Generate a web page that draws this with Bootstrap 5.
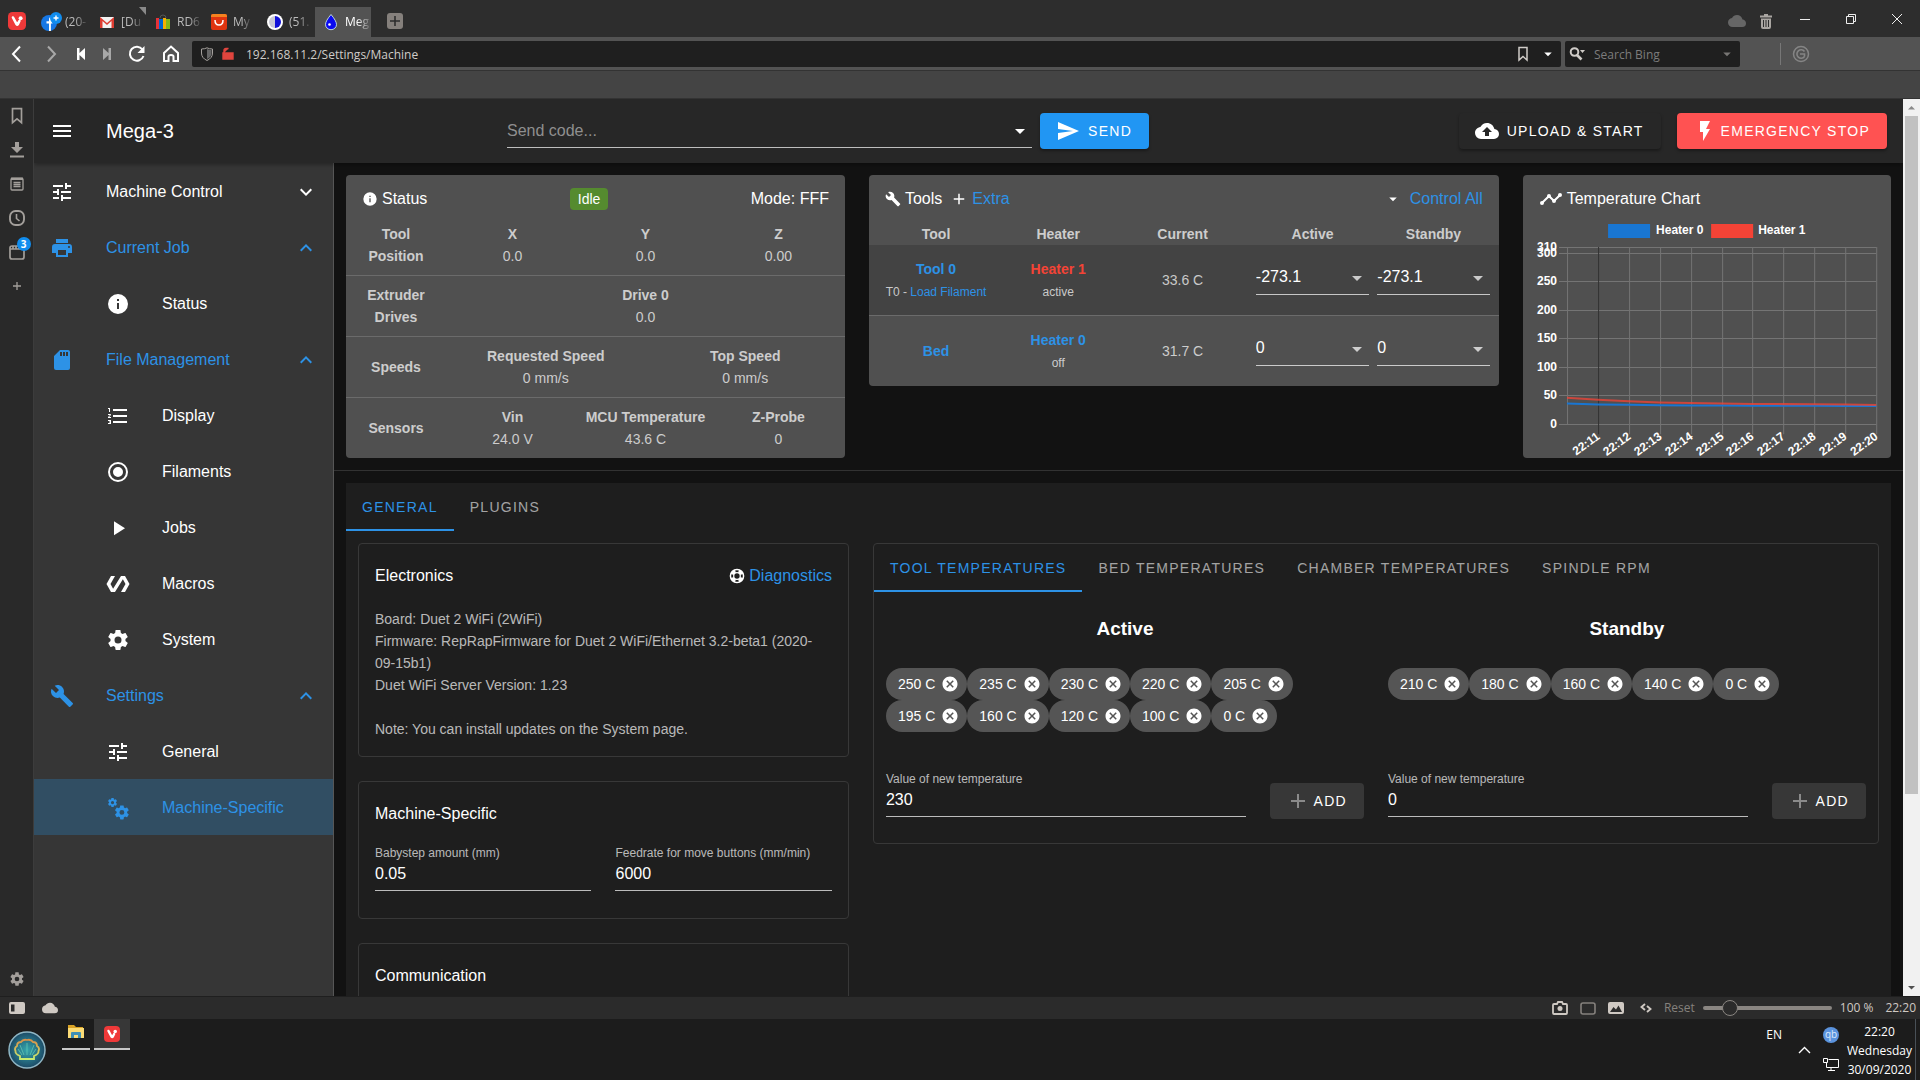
<!DOCTYPE html>
<html lang="en" data-bs-theme="dark">
<head>
<meta charset="utf-8">
<meta name="viewport" content="width=device-width, initial-scale=1">
<title>Mega-3</title>
<link href="https://cdn.jsdelivr.net/npm/bootstrap@5.3.0/dist/css/bootstrap.min.css" rel="stylesheet">
<style>
:root { --blue: #2196f3; --soft: rgba(255,255,255,.7); --rule: rgba(255,255,255,.7); }
body { font-family: "Liberation Sans", Arial, sans-serif; font-size: 14px; line-height: 22px; color: #fff; background: #1c1c1c; }
a { color: #2d92e6; text-decoration: none; }
svg { fill: currentColor; flex: none; display: block; }
button { color: inherit; }
.ico24 { width: 24px; height: 24px; }
.ico18 { width: 18px; height: 18px; }
.ico16 { width: 16px; height: 16px; }
.chrome-ui { font-family: "Open Sans", "Noto Sans", sans-serif; font-size: 12px; line-height: 16px; color: #d0ccc8; }
.plain { background: none; border: 0; padding: 0; }
.dim { color: #85817d; }

/* browser frame */
.tabstrip { background: #2d2d2d; height: 37px; padding-left: 8px; }
.viv-btn { width: 27px; }
.btab { width: 56px; height: 30px; padding: 0 0 0 8px; gap: 6px; color: #bbb; }
.btab svg { overflow: visible; }
.btab span { white-space: nowrap; -webkit-mask-image: linear-gradient(90deg,#000 50%,rgba(0,0,0,.2)); mask-image: linear-gradient(90deg,#000 50%,rgba(0,0,0,.2)); }
.btab.current { background: #535353; color: #fff; }
.wincol { width: 46px; }
.sync { color: #666; }
.toolbar { background: #535353; height: 34px; border-bottom: 1px solid #333; color: #fff; }
.navbtns { width: 192px; }
.urlbox, .findbox { background: #1f1f1f; height: 26px; border-radius: 2px; color: #d0ccc8; }
.urlbox input, .findbox input { background: none; border: 0; outline: 0; color: inherit; min-width: 0; flex: 1; padding: 2px 0 0; }
.findbox { width: 175px; }
.findbox input::placeholder { color: #7c7c7c; }
.toolend { width: 180px; color: #858585; padding-left: 40px; }
.toolend span { height: 22px; border-left: 1px solid #777; }
.bookbar { background: #444; height: 28px; border-bottom: 1px solid #333; }
.rail { width: 34px; background: #292929; border-right: 1px solid #3c3c3c; color: #a39f9b; }
.rail button { height: 34px; }
.rail-count { position: absolute; left: 9px; top: 2px; width: 14px; height: 14px; border-radius: 7px; background: #118dee; color: #fff; font-size: 10px; line-height: 14px; text-align: center; font-weight: 700; }
.scroller { width: 17px; background: #f1f1f1; color: #8a8a8a; }
.scroller .thumb { height: 678px; background: #c1c1c1; width: 13px; }
.statusbar { background: #2b2b2b; height: 23px; border-top: 1px solid #1f1f1f; color: #cfc9c3; }
.zoomer { appearance: none; width: 129px; height: 16px; background: none; margin: 0; }
.zoomer::-webkit-slider-runnable-track { height: 4px; background: #8a8682; border-radius: 2px; }
.zoomer::-webkit-slider-thumb { appearance: none; width: 16px; height: 16px; margin-top: -6px; border-radius: 50%; background: #2b2b2b; border: 1px solid #8a8682; }
.taskbar { background: #1c1c1c; height: 61px; color: #fff; }
.taskitem { width: 28px; height: 31px; border-bottom: 2px solid #c8c8c8; }
.taskitem.current { width: 36px; background: #373737; }
.clock { line-height: 19px; width: 72px; padding-top: 3px; }

/* application */
.appbar { background: #272727; height: 64px; box-shadow: 0 2px 4px rgba(0,0,0,.3); z-index: 2; padding-right: 16px; }
.appname { width: 473px; font-size: 20px; padding-left: 16px; gap: 32px; }
.codebox { max-width: 642px; }
.sidenav { width: 300px; background: #363636; border-right: 1px solid #565656; font-size: 16px; }
.sidenav a { height: 56px; padding: 1px 15px 0 16px; gap: 32px; color: #fff; }
.sidenav a.open, .sidenav a.picked { color: #2d92e6; }
.sidenav a.sub { padding-left: 72px; }
.sidenav a.picked { background: #314e63; }
.stage { background: #121212; }
.mbtn { height: 36px; border: 0; border-radius: 4px; padding: 0 17px 0 16px; font-size: 14px; letter-spacing: .09em; white-space: nowrap; color: #fff; box-shadow: 0 2px 3px rgba(0,0,0,.35); }
.mbtn.send { background: var(--blue); }
.mbtn.upload { background: #272727; }
.mbtn.stop { background: #ff5252; }
.mbtn.adder { background: #373737; box-shadow: none; margin-top: 14px; }
.mbtn.adder svg { color: #8a8a8a; }
.uline { background: none; border: 0; border-bottom: 1px solid var(--rule); border-radius: 0; color: #fff; font-size: 16px; line-height: 24px; height: 30px; padding: 0 0 4px; outline: 0; width: 100%; appearance: none; }
.codebox .uline { height: 34px; padding: 4px 0; }
.uline::placeholder { color: #8f8f8f; }
.pick { position: relative; }
.pick svg { position: absolute; right: 0; top: 1px; pointer-events: none; }
.codebox .pick svg { top: 5px; }
.panel { background: #505050; border-radius: 4px; color: rgba(255,255,255,.72); overflow: hidden; }
.panel-head { height: 48px; padding: 0 16px; font-size: 16px; color: #fff; }
.state { background: #558b2f; color: #fff; border-radius: 4px; padding: 0 8px; height: 22px; font-size: 14px; line-height: 22px; }
.srow { padding: 8px 0; }
.srow + .srow { border-top: 1px solid #6b6b6b; }
.slabel { width: 100px; padding: 0 16px; }
.heat { table-layout: fixed; width: 100%; text-align: center; }
.heat th { padding: 0; font-weight: 700; text-align: center; height: 22px; }
.heat td { height: 71px; padding: 1px 0 0; vertical-align: middle; }
.heat td.cell-in { padding: 0 4px; }
.heat .lit td { background: #434343; border-bottom: 1px solid #6b6b6b; height: 70px; }
.tiny { font-size: 12px; }
.heat a.hot { color: #f44336; }
.split { border-top: 1px solid #323232; margin: 12px 0; }
.sheet { background: #1e1e1e; margin: 0 12px; }
.mtabs { height: 48px; }
.mtabs button { padding-top: 2px; letter-spacing: .09em; font-size: 14px; color: rgba(255,255,255,.6); border-bottom: 2px solid transparent; }
.mtabs button.on { color: #2d92e6; border-bottom-color: #2d92e6; }
.box { border: 1px solid #383838; border-radius: 4px; color: var(--soft); }
.box-title { font-size: 16px; line-height: 32px; color: #fff; padding: 16px 16px 0; }
.box-fields { padding: 15px 16px 27px; }
.fieldlabel { font-size: 12px; line-height: 16px; color: var(--soft); display: block; }
.presets { height: 93px; align-content: flex-start; }
.chip { height: 32px; border-radius: 16px; background: #555; color: #fff; padding: 0 8px 0 12px; gap: 6px; }
.group-title { font-size: 19px; line-height: 28px; font-weight: 700; color: #fff; text-align: center; margin: 23px 0 25px; }
.chart text { font-size: 12px; font-weight: 700; fill: #fff; }
</style>
</head>
<body class="vh-100 d-flex flex-column overflow-hidden">

<svg width="0" height="0" class="position-absolute" aria-hidden="true">
<symbol id="menu" viewBox="0 0 24 24"><path d="M3,6H21V8H3V6M3,11H21V13H3V11M3,16H21V18H3V16Z"/></symbol>
<symbol id="tune" viewBox="0 0 24 24"><path d="M3,17V19H9V17H3M3,5V7H13V5H3M13,21V19H21V17H13V15H11V21H13M7,9V11H3V13H7V15H9V9H7M21,13V11H11V13H21M15,9H17V7H21V5H17V3H15V9Z"/></symbol>
<symbol id="printer" viewBox="0 0 24 24"><path d="M18,3H6V7H18M19,12A1,1 0 0,1 18,11A1,1 0 0,1 19,10A1,1 0 0,1 20,11A1,1 0 0,1 19,12M16,19H8V14H16M19,8H5A3,3 0 0,0 2,11V17H6V21H18V17H22V11A3,3 0 0,0 19,8Z"/></symbol>
<symbol id="info" viewBox="0 0 24 24"><path d="M13,9H11V7H13M13,17H11V11H13M12,2A10,10 0 0,0 2,12A10,10 0 0,0 12,22A10,10 0 0,0 22,12A10,10 0 0,0 12,2Z"/></symbol>
<symbol id="sd" viewBox="0 0 24 24"><path d="M18,8H16V4H18M15,8H13V4H15M12,8H10V4H12M18,2H10L4,8V20A2,2 0 0,0 6,22H18A2,2 0 0,0 20,20V4A2,2 0 0,0 18,2Z"/></symbol>
<symbol id="list" viewBox="0 0 24 24"><path d="M7,13V11H21V13H7M7,19V17H21V19H7M7,7V5H21V7H7M3,8V5H2V4H4V8H3M2,17V16H5V20H2V19H4V18.5H3V17.5H4V17H2M4.25,10A0.75,0.75 0 0,1 5,10.75C5,10.95 4.92,11.14 4.79,11.27L3.12,13H5V14H2V13.08L4,11H2V10H4.25Z"/></symbol>
<symbol id="radio" viewBox="0 0 24 24"><path d="M12,20A8,8 0 0,1 4,12A8,8 0 0,1 12,4A8,8 0 0,1 20,12A8,8 0 0,1 12,20M12,2A10,10 0 0,0 2,12A10,10 0 0,0 12,22A10,10 0 0,0 22,12A10,10 0 0,0 12,2M12,7A5,5 0 0,0 7,12A5,5 0 0,0 12,17A5,5 0 0,0 17,12A5,5 0 0,0 12,7Z"/></symbol>
<symbol id="play" viewBox="0 0 24 24"><path d="M8,5.14V19.14L19,12.14L8,5.14Z"/></symbol>
<symbol id="polymer" viewBox="0 0 24 24"><path d="M19,4H15L7.1,16.63L4.5,12L9,4H5L0.5,12L5,20H9L16.89,7.37L19.5,12L15,20H19L23.5,12L19,4Z"/></symbol>
<symbol id="cog" viewBox="0 0 24 24"><path id="cogshape" d="M12,15.5A3.5,3.5 0 0,1 8.5,12A3.5,3.5 0 0,1 12,8.5A3.5,3.5 0 0,1 15.5,12A3.5,3.5 0 0,1 12,15.5M19.43,12.97C19.47,12.65 19.5,12.33 19.5,12C19.5,11.67 19.47,11.34 19.43,11L21.54,9.37C21.73,9.22 21.78,8.95 21.66,8.73L19.66,5.27C19.54,5.05 19.27,4.96 19.05,5.05L16.56,6.05C16.04,5.66 15.5,5.32 14.87,5.07L14.5,2.42C14.46,2.18 14.25,2 14,2H10C9.75,2 9.54,2.18 9.5,2.42L9.13,5.07C8.5,5.32 7.96,5.66 7.44,6.05L4.95,5.05C4.73,4.96 4.46,5.05 4.34,5.27L2.34,8.73C2.21,8.95 2.27,9.22 2.46,9.37L4.57,11C4.53,11.34 4.5,11.67 4.5,12C4.5,12.33 4.53,12.65 4.57,12.97L2.46,14.63C2.27,14.78 2.21,15.05 2.34,15.27L4.34,18.73C4.46,18.95 4.73,19.03 4.95,18.95L7.44,17.94C7.96,18.34 8.5,18.68 9.13,18.93L9.5,21.58C9.54,21.82 9.75,22 10,22H14C14.25,22 14.46,21.82 14.5,21.58L14.87,18.93C15.5,18.67 16.04,18.34 16.56,17.94L19.05,18.95C19.27,19.03 19.54,18.95 19.66,18.73L21.66,15.27C21.78,15.05 21.73,14.78 21.54,14.63L19.43,12.97Z"/></symbol>
<symbol id="cogs" viewBox="0 0 24 24"><use href="#cogshape" transform="translate(1 1) scale(.46)"/><use href="#cogshape" transform="translate(7.5 8) scale(.7)"/></symbol>
<symbol id="wrench" viewBox="0 0 24 24"><path d="M22.7,19L13.6,9.9C14.5,7.6 14,4.9 12.1,3C10.1,1 7.1,0.6 4.7,1.7L9,6L6,9L1.6,4.7C0.4,7.1 0.9,10.1 2.9,12.1C4.8,14 7.5,14.5 9.8,13.6L18.9,22.7C19.3,23.1 19.9,23.1 20.3,22.7L22.6,20.4C23.1,20 23.1,19.3 22.7,19Z"/></symbol>
<symbol id="down" viewBox="0 0 24 24"><path d="M7.41,8.58L12,13.17L16.59,8.58L18,10L12,16L6,10L7.41,8.58Z"/></symbol>
<symbol id="up" viewBox="0 0 24 24"><path d="M7.41,15.41L12,10.83L16.59,15.41L18,14L12,8L6,14L7.41,15.41Z"/></symbol>
<symbol id="drop" viewBox="0 0 24 24"><path d="M7,10L12,15L17,10H7Z"/></symbol>
<symbol id="send" viewBox="0 0 24 24"><path d="M2,21L23,12L2,3V10L17,12L2,14V21Z"/></symbol>
<symbol id="cloudup" viewBox="0 0 24 24"><path d="M14,13V17H10V13H7L12,8L17,13M19.35,10.03C18.67,6.59 15.64,4 12,4C9.11,4 6.6,5.64 5.35,8.03C2.34,8.36 0,10.9 0,14A6,6 0 0,0 6,20H19A5,5 0 0,0 24,15C24,12.36 21.95,10.22 19.35,10.03Z"/></symbol>
<symbol id="cloud" viewBox="0 0 24 24"><path d="M19.35,10.03C18.67,6.59 15.64,4 12,4C9.11,4 6.6,5.64 5.35,8.03C2.34,8.36 0,10.9 0,14A6,6 0 0,0 6,20H19A5,5 0 0,0 24,15C24,12.36 21.95,10.22 19.35,10.03Z"/></symbol>
<symbol id="flash" viewBox="0 0 24 24"><path d="M7,2V13H10V22L17,10H13L17,2H7Z"/></symbol>
<symbol id="plus" viewBox="0 0 24 24"><path d="M19,13H13V19H11V13H5V11H11V5H13V11H19V13Z"/></symbol>
<symbol id="buoy" viewBox="0 0 24 24"><path fill-rule="evenodd" d="M12,1A11,11 0 1,0 12,23A11,11 0 1,0 12,1M12,8A4,4 0 1,1 12,16A4,4 0 1,1 12,8M9.2,3.7Q12,2.8 14.8,3.7L13.8,6.4Q12,5.800 10.2,6.4ZM9.2,20.3Q12,21.2 14.8,20.3L13.8,17.6Q12,18.2 10.2,17.6ZM3.7,9.2Q2.8,12 3.7,14.8L6.4,13.8Q5.8,12 6.4,10.2ZM20.3,9.2Q21.2,12 20.3,14.8L17.6,13.8Q18.2,12 17.6,10.2Z"/></symbol>
<symbol id="xcirc" viewBox="0 0 24 24"><path d="M12,2C17.53,2 22,6.47 22,12C22,17.53 17.53,22 12,22C6.47,22 2,17.53 2,12C2,6.47 6.47,2 12,2M15.59,7L12,10.59L8.41,7L7,8.41L10.59,12L7,15.59L8.41,17L12,13.41L15.59,17L17,15.59L13.41,12L17,8.41L15.59,7Z"/></symbol>
<symbol id="trend" viewBox="0 0 24 24"><path d="M23,8A2,2 0 0,1 21,10C20.82,10 20.65,9.97 20.5,9.93L16.93,13.5C16.97,13.65 17,13.82 17,14A2,2 0 0,1 15,16A2,2 0 0,1 13,14C13,13.82 13.03,13.65 13.07,13.5L10.5,10.93C10.35,10.97 10.18,11 10,11C9.82,11 9.65,10.97 9.5,10.93L4.93,15.5C4.97,15.65 5,15.82 5,16A2,2 0 0,1 3,18A2,2 0 0,1 1,16A2,2 0 0,1 3,14C3.18,14 3.35,14.03 3.5,14.07L8.07,9.5C8.03,9.35 8,9.18 8,9A2,2 0 0,1 10,7A2,2 0 0,1 12,9C12,9.18 11.97,9.35 11.93,9.5L14.5,12.07C14.65,12.03 14.82,12 15,12C15.18,12 15.35,12.03 15.5,12.07L19.07,8.5C19.03,8.35 19,8.18 19,8A2,2 0 0,1 21,6A2,2 0 0,1 23,8Z"/></symbol>
<symbol id="viv" viewBox="0 0 18 18"><rect width="18" height="18" rx="4.5" fill="#ef3939"/><path d="M5,5.5L8.6,12.2Q9.2,13 9.8,12.2L11.4,9" fill="none" stroke="#fff" stroke-width="2.6" stroke-linecap="round"/><circle cx="12.6" cy="6.2" r="2" fill="#fff"/></symbol>
<symbol id="mark" viewBox="0 0 16 16"><path d="M4,1.5H12V14L8,10.5L4,14Z" fill="none" stroke="currentColor" stroke-width="1.5"/></symbol>
</svg>

<!-- browser tabs -->
<div class="tabstrip chrome-ui d-flex align-items-end flex-shrink-0">
  <button class="plain viv-btn align-self-center pt-1" aria-label="Vivaldi menu"><svg width="18" height="18"><use href="#viv"/></svg></button>
  <button class="plain btab d-flex align-items-center"><svg class="ico16" viewBox="0 0 16 16"><circle cx="6" cy="9" r="8" fill="#1677e5"/><path d="M6 17V9.500H3.500V7.300H6V5.500Q6 3 9 3.100V5.100Q7.900 5 7.900 6V7.300H9.500V9.500H7.900V17Z" fill="#fff"/><circle cx="13" cy="4" r="6" fill="#118dee"/><path d="M13 1.500V6.500M10.500 4H15.500" stroke="#fff" stroke-width="1.400"/></svg><span>(20-</span></button>
  <button class="plain btab d-flex align-items-center"><svg class="ico16" viewBox="0 0 16 16"><path d="M1 3H15V14H1Z" fill="#f2f2f2"/><path d="M1 14V3L8 9L15 3V14H12.500V7L8 11L3.500 7V14Z" fill="#dd3c31"/><path d="M40 -7H47V1Z" fill="#8a8a8a"/></svg><span>[Du</span></button>
  <button class="plain btab d-flex align-items-center"><svg class="ico16" viewBox="0 0 16 16"><path d="M1 4H4V15H1Z" fill="#e53238"/><path d="M4 5H8V15H4Z" fill="#0064d2"/><path d="M8 4H11V15H8Z" fill="#f5af02"/><path d="M11 5H15V15H11Z" fill="#86b817"/><path d="M5 4Q5 1 8 1Q11 1 11 4" fill="none" stroke="#555"/></svg><span>RD6</span></button>
  <button class="plain btab d-flex align-items-center"><svg class="ico16" viewBox="0 0 16 16"><rect width="16" height="16" rx="2" fill="#e0340f"/><path d="M0 3V2Q0 0 2 0H14Q16 0 16 2V3Z" fill="#f5821f"/><path d="M4 6Q4 11 8 11Q12 11 12 6" fill="none" stroke="#fff" stroke-width="1.500"/></svg><span>My</span></button>
  <button class="plain btab d-flex align-items-center"><svg class="ico16" viewBox="0 0 16 16"><circle cx="8" cy="8" r="8" fill="#fff"/><path d="M8 2A6 6 0 0 1 8 14Z" fill="#1010d8"/><path d="M8 2A6 6 0 0 0 8 14Z" fill="#c9c9d6"/></svg><span>(51.</span></button>
  <button class="plain btab current d-flex align-items-center"><svg class="ico16" viewBox="0 0 16 16"><path d="M8 0.500Q13.500 7 13.500 10.500A5.500 5.200 0 0 1 2.500 10.500Q2.500 7 8 0.500Z" fill="#0a0af0" stroke="#dfe" stroke-width=".8"/><circle cx="6.500" cy="10.500" r="1.300" fill="#fff"/></svg><span>Meg</span></button>
  <button class="plain ms-3 mb-2" aria-label="New tab"><svg class="ico16" viewBox="0 0 16 16"><rect width="16" height="16" rx="3" fill="#85807c"/><path d="M8 3V13M3 8H13" stroke="#2d2d2d" stroke-width="1.600"/></svg></button>
  <div class="ms-auto d-flex align-items-center align-self-stretch">
    <button class="plain sync me-2 pt-1" aria-label="Sync"><svg class="ico18"><use href="#cloud"/></svg></button>
    <button class="plain me-2 ms-1 pt-1" aria-label="Closed tabs"><svg class="ico16" viewBox="0 0 16 16"><path d="M2 2.500H6V1H10V2.500H14V4.500H2ZM3 5.500H13V14Q13 16 11 16H5Q3 16 3 14ZM5 7V14H6V7ZM7.500 7V14H8.500V7ZM10 7V14H11V7Z" fill="#aaa6a2" fill-rule="evenodd"/></svg></button>
    <button class="plain wincol" aria-label="Minimise"><svg class="mx-auto" width="10" height="10"><path d="M0 5.500H10" stroke="#eee"/></svg></button>
    <button class="plain wincol" aria-label="Restore"><svg class="mx-auto" width="10" height="10"><path d="M.5 2.500H7.500V9.500H.5ZM2.500 2.500V.5H9.500V7.500H7.500" fill="none" stroke="#eee"/></svg></button>
    <button class="plain wincol" aria-label="Close"><svg class="mx-auto" width="10" height="10"><path d="M0 0L10 10M10 0L0 10" stroke="#eee"/></svg></button>
  </div>
</div>

<!-- address bar -->
<div class="toolbar chrome-ui d-flex align-items-center flex-shrink-0">
  <div class="navbtns d-flex align-items-center gap-3 ps-2">
    <button class="plain" aria-label="Back"><svg class="ico18" viewBox="0 0 18 18"><path d="M12 1.500L5 9L12 16.500" fill="none" stroke="#fff" stroke-width="2"/></svg></button>
    <button class="plain" aria-label="Forward"><svg class="ico18" viewBox="0 0 18 18"><path d="M6 1.500L13 9L6 16.500" fill="none" stroke="#a8a8a8" stroke-width="2"/></svg></button>
    <button class="plain" aria-label="Rewind"><svg width="10" height="12"><path d="M1 0H3.500V5L9 0V12L3.500 7V12H1Z" fill="#fff"/></svg></button>
    <button class="plain" aria-label="Fast forward"><svg width="10" height="12"><path d="M9 0H6.500V5L1 0V12L6.500 7V12H9Z" fill="#a8a8a8"/></svg></button>
    <button class="plain" aria-label="Reload"><svg class="ico18" viewBox="0 0 18 18"><path d="M14.500 4.500A7 7 0 1 0 15.500 11" fill="none" stroke="#fff" stroke-width="2"/><path d="M16.500 1V8H9.500Z" fill="#fff"/></svg></button>
    <button class="plain" aria-label="Home"><svg class="ico18" viewBox="0 0 18 18"><path d="M2 8L9 1.500L16 8V16H11.500V11.500Q11.500 10 9 10Q6.500 10 6.500 11.500V16H2Z" fill="none" stroke="#fff" stroke-width="2"/></svg></button>
  </div>
  <div class="urlbox d-flex align-items-center flex-grow-1 ps-1">
    <svg class="ms-1 me-2" width="14" height="14"><path d="M1.500 2Q5 2 7 .8Q9 2 12.500 2V6Q12.500 11 7 13.500Q1.500 11 1.500 6Z" fill="none" stroke="#a5a19d"/><path d="M7 2V12Q11.500 10 11.500 6V3Q9 3 7 2Z" fill="#666"/></svg>
    <svg class="me-2" width="12" height="13"><path d="M1 6H11V12H1ZM2 6V3.500Q2 1.500 4 1.500H6.500" fill="#e0453e" stroke="#e0453e" stroke-width="1.400"/></svg>
    <input class="ms-1" aria-label="Address" value="192.168.11.2/Settings/Machine">
    <svg class="ico16 me-2"><use href="#mark"/></svg>
    <svg class="ico18 me-1 text-white"><use href="#drop"/></svg>
  </div>
  <div class="findbox d-flex align-items-center ms-1 px-1">
    <svg class="me-2" width="17" height="14"><circle cx="5.500" cy="5" r="3.800" fill="none" stroke="#d0ccc8" stroke-width="2"/><path d="M8 8L12.500 12.500" stroke="#d0ccc8" stroke-width="2.600"/><path d="M11 3H16L13.500 6Z"/></svg>
    <input aria-label="Search" placeholder="Search Bing">
    <svg class="ico18 opacity-50"><use href="#drop"/></svg>
  </div>
  <div class="toolend d-flex align-items-center">
    <span></span>
    <svg class="ms-2 ico24" viewBox="-3 -3 24 24"><circle cx="9" cy="9" r="7.500" fill="none" stroke="currentColor" stroke-width="1.500"/><path d="M12.500 6.500A4.200 4.200 0 1 0 12.500 11.500M8 9H12.500V11.500" fill="none" stroke="currentColor" stroke-width="1.600"/></svg>
  </div>
</div>
<div class="bookbar flex-shrink-0"></div>

<div class="d-flex flex-grow-1 overflow-hidden">
  <!-- panel rail -->
  <div class="rail chrome-ui d-flex flex-column align-items-center flex-shrink-0">
    <button class="plain" aria-label="Bookmarks"><svg class="ico18"><use href="#mark"/></svg></button>
    <button class="plain" aria-label="Downloads"><svg class="ico18" viewBox="0 0 18 18"><path d="M7 1H11V6H15L9 12L3 6H7ZM2 14.500H16V16.500H2Z"/></svg></button>
    <button class="plain" aria-label="Notes"><svg class="ico16" viewBox="0 0 16 16"><path d="M3 2.500H13Q14 2.500 14 3.500V13Q14 14 13 14H3Q2 14 2 13V3.500Q2 2.500 3 2.500ZM4.500 6.500H11.500M4.500 8.500H11.500M4.500 10.500H11.500" fill="none" stroke="currentColor" stroke-width="1.300"/><path d="M2 1.500H14V4H2Z"/></svg></button>
    <button class="plain" aria-label="History"><svg class="ico18" viewBox="0 0 18 18"><rect x="2" y="2" width="14" height="14" rx="5.500" fill="none" stroke="currentColor" stroke-width="1.900"/><path d="M8.500 5V9.500L11.500 12" fill="none" stroke="currentColor" stroke-width="1.600"/></svg></button>
    <button class="plain position-relative" aria-label="Windows"><svg class="ico18" viewBox="0 0 18 18"><path d="M2 5Q2 3 4 3H14Q16 3 16 5V14Q16 16 14 16H4Q2 16 2 14ZM2 6H16M5 3V6M8 3V6M11 3V6" fill="none" stroke="currentColor" stroke-width="1.700"/></svg><span class="rail-count">3</span></button>
    <button class="plain" aria-label="Add panel"><svg class="ico16" viewBox="0 0 16 16"><path d="M8 4V12M4 8H12" stroke="currentColor" stroke-width="1.300"/></svg></button>
    <button class="plain mt-auto" aria-label="Settings"><svg class="ico16"><use href="#cog"/></svg></button>
  </div>

  <div class="d-flex flex-column flex-grow-1 overflow-hidden">
    <header class="appbar d-flex align-items-center flex-shrink-0">
      <div class="appname d-flex align-items-center flex-shrink-0"><button class="plain" aria-label="Toggle menu"><svg class="ico24"><use href="#menu"/></svg></button><span>Mega-3</span></div>
      <form class="codebox d-flex align-items-center flex-grow-1 gap-2">
        <div class="pick flex-grow-1"><input class="uline" aria-label="Send code" placeholder="Send code..."><svg class="ico24"><use href="#drop"/></svg></div>
        <button type="button" class="mbtn send d-flex align-items-center gap-2"><svg class="ico24"><use href="#send"/></svg>SEND</button>
      </form>
      <div class="d-flex ms-auto gap-3">
        <button class="mbtn upload d-flex align-items-center gap-2"><svg class="ico24"><use href="#cloudup"/></svg>UPLOAD &amp; START</button>
        <button class="mbtn stop d-flex align-items-center gap-1"><svg class="ico24"><use href="#flash"/></svg>EMERGENCY STOP</button>
      </div>
    </header>

    <div class="d-flex flex-grow-1 overflow-hidden">
      <nav class="sidenav flex-shrink-0 overflow-hidden">
        <a href="#" class="d-flex align-items-center"><svg class="ico24"><use href="#tune"/></svg>Machine Control<svg class="ico24 ms-auto"><use href="#down"/></svg></a>
        <a href="#" class="d-flex align-items-center open"><svg class="ico24"><use href="#printer"/></svg>Current Job<svg class="ico24 ms-auto"><use href="#up"/></svg></a>
        <a href="#" class="d-flex align-items-center sub"><svg class="ico24"><use href="#info"/></svg>Status</a>
        <a href="#" class="d-flex align-items-center open"><svg class="ico24"><use href="#sd"/></svg>File Management<svg class="ico24 ms-auto"><use href="#up"/></svg></a>
        <a href="#" class="d-flex align-items-center sub"><svg class="ico24"><use href="#list"/></svg>Display</a>
        <a href="#" class="d-flex align-items-center sub"><svg class="ico24"><use href="#radio"/></svg>Filaments</a>
        <a href="#" class="d-flex align-items-center sub"><svg class="ico24"><use href="#play"/></svg>Jobs</a>
        <a href="#" class="d-flex align-items-center sub"><svg class="ico24"><use href="#polymer"/></svg>Macros</a>
        <a href="#" class="d-flex align-items-center sub"><svg class="ico24"><use href="#cog"/></svg>System</a>
        <a href="#" class="d-flex align-items-center open"><svg class="ico24"><use href="#wrench"/></svg>Settings<svg class="ico24 ms-auto"><use href="#up"/></svg></a>
        <a href="#" class="d-flex align-items-center sub"><svg class="ico24"><use href="#tune"/></svg>General</a>
        <a href="#" class="d-flex align-items-center sub picked"><svg class="ico24"><use href="#cogs"/></svg>Machine-Specific</a>
      </nav>

      <main class="stage flex-grow-1 overflow-hidden">
        <div class="row mx-0 pt-2 mt-1">
          <div class="col-4">
            <section class="panel">
              <div class="panel-head d-flex align-items-center justify-content-between"><span class="d-flex align-items-center gap-1"><svg class="ico16"><use href="#info"/></svg>Status</span><span class="state">Idle</span><span>Mode: FFF</span></div>
              <div>
                <div class="srow d-flex align-items-center text-center pt-0"><strong class="slabel">Tool Position</strong><div class="row g-0 flex-grow-1"><div class="col"><strong>X</strong><br>0.0</div><div class="col"><strong>Y</strong><br>0.0</div><div class="col"><strong>Z</strong><br>0.00</div></div></div>
                <div class="srow d-flex align-items-center text-center"><strong class="slabel">Extruder Drives</strong><div class="row g-0 flex-grow-1"><div class="col"><strong>Drive 0</strong><br>0.0</div></div></div>
                <div class="srow d-flex align-items-center text-center"><strong class="slabel">Speeds</strong><div class="row g-0 flex-grow-1"><div class="col"><strong>Requested Speed</strong><br>0 mm/s</div><div class="col"><strong>Top Speed</strong><br>0 mm/s</div></div></div>
                <div class="srow d-flex align-items-center text-center"><strong class="slabel">Sensors</strong><div class="row g-0 flex-grow-1"><div class="col"><strong>Vin</strong><br>24.0 V</div><div class="col"><strong>MCU Temperature</strong><br>43.6 C</div><div class="col"><strong>Z-Probe</strong><br>0</div></div></div>
              </div>
            </section>
          </div>
          <div class="col-5">
            <section class="panel">
              <div class="panel-head d-flex align-items-center"><svg class="ico16 me-1"><use href="#wrench"/></svg>Tools<svg class="ico18 ms-2 me-1"><use href="#plus"/></svg><a href="#">Extra</a><svg class="ico18 ms-auto me-2"><use href="#drop"/></svg><a href="#">Control All</a></div>
              <table class="heat">
                <colgroup><col style="width:21.3%"><col style="width:17.5%"><col style="width:22%"><col style="width:19.3%"><col style="width:19.1%"><col style="width:0.8%"></colgroup>
                <thead><tr><th>Tool</th><th>Heater</th><th>Current</th><th>Active</th><th>Standby</th><th></th></tr></thead>
                <tbody>
                  <tr class="lit"><td><a href="#" class="fw-bold">Tool 0</a><br><span class="tiny">T0 - <a href="#">Load Filament</a></span></td><td><a href="#" class="fw-bold hot">Heater 1</a><br><span class="tiny">active</span></td><td>33.6 C</td>
                    <td class="cell-in"><div class="pick"><select class="uline" aria-label="Tool 0 active"><option>-273.1</option></select><svg class="ico24"><use href="#drop"/></svg></div></td>
                    <td class="cell-in"><div class="pick"><select class="uline" aria-label="Tool 0 standby"><option>-273.1</option></select><svg class="ico24"><use href="#drop"/></svg></div></td><td></td></tr>
                  <tr><td><a href="#" class="fw-bold">Bed</a></td><td><a href="#" class="fw-bold">Heater 0</a><br><span class="tiny">off</span></td><td>31.7 C</td>
                    <td class="cell-in"><div class="pick"><select class="uline" aria-label="Bed active"><option>0</option></select><svg class="ico24"><use href="#drop"/></svg></div></td>
                    <td class="cell-in"><div class="pick"><select class="uline" aria-label="Bed standby"><option>0</option></select><svg class="ico24"><use href="#drop"/></svg></div></td><td></td></tr>
                </tbody>
              </table>
            </section>
          </div>
          <div class="col-3">
            <section class="panel">
              <div class="panel-head d-flex align-items-center gap-1"><svg class="ico24"><use href="#trend"/></svg>Temperature Chart</div>
              <svg class="chart w-100" viewBox="0 0 368 235" id="tempChart">
                <rect x="85" y="1" width="42" height="14" fill="#1976d2"/><text x="133" y="11">Heater 0</text>
                <rect x="188" y="1" width="42" height="14" fill="#f44336"/><text x="235" y="11">Heater 1</text>
              </svg>
            </section>
          </div>
        </div>

        <div class="split"></div>

        <div class="sheet">
          <div class="mtabs d-flex"><button class="plain px-3 on">GENERAL</button><button class="plain px-3">PLUGINS</button></div>
          <div class="row mx-0 pt-2 mt-1">
            <div class="col-4">
              <section class="box mb-4">
                <div class="box-title d-flex justify-content-between"><span>Electronics</span><a href="#" class="d-flex align-items-center gap-1"><svg class="ico16 text-white"><use href="#buoy"/></svg>Diagnostics</a></div>
                <div class="p-3">Board: Duet 2 WiFi (2WiFi)<br>Firmware: RepRapFirmware for Duet 2 WiFi/Ethernet 3.2-beta1 (2020-09-15b1)<br>Duet WiFi Server Version: 1.23<br><br>Note: You can install updates on the System page.</div>
              </section>
              <section class="box mb-4">
                <div class="box-title">Machine-Specific</div>
                <div class="box-fields d-flex gap-4">
                  <div class="flex-fill"><label class="fieldlabel" for="baby">Babystep amount (mm)</label><input id="baby" class="uline" value="0.05"></div>
                  <div class="flex-fill"><label class="fieldlabel" for="feed">Feedrate for move buttons (mm/min)</label><input id="feed" class="uline" value="6000"></div>
                </div>
              </section>
              <section class="box">
                <div class="box-title">Communication</div>
                <div class="p-3"></div>
              </section>
            </div>
            <div class="col-8">
              <section class="box">
                <div class="mtabs d-flex"><button class="plain px-3 on">TOOL TEMPERATURES</button><button class="plain px-3">BED TEMPERATURES</button><button class="plain px-3">CHAMBER TEMPERATURES</button><button class="plain px-3">SPINDLE RPM</button></div>
                <div class="row mx-0">
                  <div class="col-6">
                    <h3 class="group-title">Active</h3>
                    <div class="presets d-flex flex-wrap" data-values="250,235,230,220,205,|,195,160,120,100,0"></div>
                    <div class="d-flex align-items-center gap-4 pt-2 pb-4">
                      <div class="flex-grow-1"><label class="fieldlabel" for="act">Value of new temperature</label><input id="act" class="uline" value="230"></div>
                      <button class="mbtn adder d-flex align-items-center gap-1"><svg class="ico24"><use href="#plus"/></svg>ADD</button>
                    </div>
                  </div>
                  <div class="col-6">
                    <h3 class="group-title">Standby</h3>
                    <div class="presets d-flex flex-wrap" data-values="210,180,160,140,0"></div>
                    <div class="d-flex align-items-center gap-4 pt-2 pb-4">
                      <div class="flex-grow-1"><label class="fieldlabel" for="stb">Value of new temperature</label><input id="stb" class="uline" value="0"></div>
                      <button class="mbtn adder d-flex align-items-center gap-1"><svg class="ico24"><use href="#plus"/></svg>ADD</button>
                    </div>
                  </div>
                </div>
              </section>
            </div>
          </div>
          <div class="vh-100"></div>
        </div>
      </main>
    </div>
  </div>
  <div class="scroller d-flex flex-column align-items-center flex-shrink-0">
    <svg width="17" height="17"><path d="M5 10.500L8.500 7L12 10.500Z"/></svg>
    <div class="thumb"></div>
    <svg class="mt-auto" width="17" height="17"><path d="M5 7L8.500 10.500L12 7Z" fill="#505050"/></svg>
  </div>
</div>

<!-- browser status bar -->
<div class="statusbar chrome-ui d-flex align-items-center flex-shrink-0">
  <svg class="ms-2" width="18" height="14"><path d="M3 1H15Q17 1 17 3V11Q17 13 15 13H3Q1 13 1 11V3Q1 1 3 1ZM3 3.500V10.500H6.500V3.500Z" fill-rule="evenodd"/></svg>
  <svg class="ms-3 ico16"><use href="#cloud"/></svg>
  <div class="ms-auto d-flex align-items-center gap-2 pe-1">
    <svg class="me-1" width="16" height="14"><path d="M2 3H5L6 1H10L11 3H14Q15 3 15 4V12Q15 13 14 13H2Q1 13 1 12V4Q1 3 2 3Z" fill="none" stroke="currentColor" stroke-width="1.800"/><circle cx="8" cy="7.500" r="2.500"/></svg>
    <svg class="me-1 dim" width="16" height="14"><rect x="1" y="2" width="14" height="11" rx="2" fill="none" stroke="currentColor" stroke-width="1.600"/></svg>
    <svg class="me-1" width="16" height="14"><path d="M2 1H14Q16 1 16 3V11Q16 13 14 13H2Q0 13 0 11V3Q0 1 2 1ZM2 11H14L10.500 4.500L8 8.500L5.500 6Z" fill-rule="evenodd"/></svg>
    <svg class="me-1 ms-1" width="12" height="14"><path d="M5 3L1.500 6L5 9M7 5L10.500 8L7 11" fill="none" stroke="currentColor" stroke-width="1.900"/></svg>
    <button class="plain dim">Reset</button>
    <input type="range" class="zoomer" aria-label="Zoom" value="17">
    <span class="me-1">100 %</span>
    <span>22:20</span>
  </div>
</div>

<!-- desktop taskbar -->
<div class="taskbar chrome-ui d-flex flex-shrink-0">
  <button class="plain ms-2 me-3 pe-0" aria-label="Start"><svg width="38" height="38" viewBox="0 0 38 38"><defs><radialGradient id="sea"><stop offset="0" stop-color="#36a6ad"/><stop offset="1" stop-color="#1c4a66"/></radialGradient><linearGradient id="shell" x2="0" y2="1"><stop offset="0" stop-color="#d99048"/><stop offset="1" stop-color="#c8ec70"/></linearGradient></defs><circle cx="19" cy="19" r="18" fill="url(#sea)" stroke="#8fb6c4" stroke-width="1.500"/><path d="M12 28V25Q7 23 7.500 20Q6 17 9 15Q9 11 13 11Q15 8 19 9Q23 8 25 11Q29 11 29 15Q32 17 30.500 20Q31 23 26 25V28Z" fill="none" stroke="url(#shell)" stroke-width="1.800"/><path d="M19 24V12M16 24L12 14M22 24L26 14M14 24L10 18M24 24L28 18" stroke="#5fc6b4" stroke-width=".8"/></svg></button>
  <button class="plain taskitem me-1 pb-1" aria-label="File Explorer"><svg class="mx-auto" width="17" height="15"><path d="M0 1H6L8 3H15V6H0Z" fill="#d9a326"/><path d="M0 4H16V14H0Z" fill="#fbdb75"/><path d="M3 14V9Q3 8 4 8H12Q13 8 13 9V14H10V11H6V14Z" fill="#3f8fb5"/></svg></button>
  <button class="plain taskitem current" aria-label="Vivaldi"><svg class="mx-auto" width="16" height="16"><use href="#viv"/></svg></button>
  <div class="ms-auto d-flex">
    <span class="pt-2 me-3">EN</span>
    <button class="plain me-2" aria-label="Show hidden icons"><svg width="13" height="8"><path d="M1 7L6.500 1.500L12 7" fill="none" stroke="#fff" stroke-width="1.400"/></svg></button>
    <div class="d-flex flex-column justify-content-between pt-1 mt-1 pb-2 ms-1">
      <svg class="ico16" viewBox="0 0 16 16"><circle cx="8" cy="8" r="8" fill="#5b93dd"/><text x="8" y="11" text-anchor="middle" font-size="10" fill="#dbe9fb">qb</text></svg>
      <svg width="17" height="15"><path d="M5.500 2.500H15.500V10.500H3.500V6M8 10.500V13.500M5 13.500H12M.5 1.500H4.500V5.500H.5Z" fill="none" stroke="#fff"/></svg>
    </div>
    <div class="clock text-center border-end ms-1 me-1">22:20<br>Wednesday<br>30/09/2020</div>
  </div>
</div>

<script src="https://cdn.jsdelivr.net/npm/bootstrap@5.3.0/dist/js/bootstrap.bundle.min.js"></script>
<script>
// Preset chips
document.querySelectorAll('.presets').forEach(function (box) {
  box.innerHTML = box.dataset.values.split(',').map(function (v) {
    if (v === '|') return '<span class="w-100"></span>';
    return '<span class="chip d-flex align-items-center">' + v + ' C<button class="plain" aria-label="Remove ' + v + '"><svg class="ico18"><use href="#xcirc"/></svg></button></span>';
  }).join('');
});
// Temperature chart: plot area x 44..353, y 24..201
(function () {
  var s = '', y0 = 201, h = 177, y = function (t) { return y0 - t * h / 310; };
  [0, 50, 100, 150, 200, 250, 300, 310].forEach(function (t) {
    var p = Math.round(y(t)) + .5;
    s += '<path d="M36 ' + p + 'H353" stroke="#747474"/><text x="34" y="' + (p + 3) + '" text-anchor="end">' + t + '</text>';
  });
  for (var i = 0; i <= 10; i++) {
    var x = Math.round(44 + i * 30.9) + .5;
    s += '<path d="M' + x + ' 24V' + (i ? 211 : 202) + '" stroke="' + (i === 1 ? '#333' : '#747474') + '"/>';
    if (i) s += '<text text-anchor="end" transform="translate(' + (x + 2) + ' 215) rotate(-36)">22:' + (10 + i) + '</text>';
  }
  function line(v, c) {
    return '<polyline fill="none" stroke-width="2" stroke="' + c + '" points="' + v.map(function (t, i) { return (44 + i * 30.9) + ',' + y(t); }).join(' ') + '"/>';
  }
  s += line([36, 34.500, 33.800, 33, 32.600, 32.500, 32.300, 32.100, 32, 31.900, 31.700], '#1976d2');
  s += line([46, 42.500, 40, 38, 36.800, 36, 35.400, 35, 34.600, 34.200, 33.600], 'rgba(244,67,54,.75)');
  document.getElementById('tempChart').insertAdjacentHTML('beforeend', s);
})();
</script>
</body>
</html>
